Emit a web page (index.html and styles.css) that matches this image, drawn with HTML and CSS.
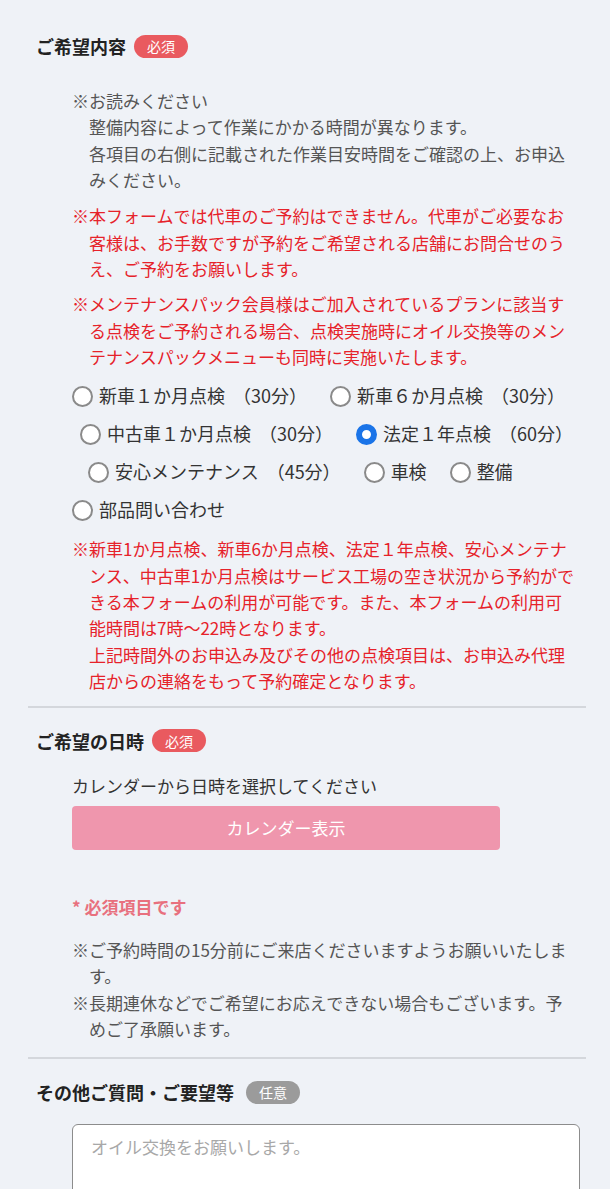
FILE: index.html
```html
<!DOCTYPE html>
<html lang="ja">
<head>
<meta charset="utf-8">
<title>ご予約フォーム</title>
<link rel="stylesheet" href="styles.css">
</head>
<body>
<div class="page">
  <section class="section section-first">
    <h2 class="heading">ご希望内容<span class="badge badge-req">必須</span></h2>
    <div class="body">
      <div class="note-gray">
        <p class="hang">※お読みください<br>整備内容によって作業にかかる時間が異なります。<br>各項目の右側に記載された作業目安時間をご確認の上、お申込みください。</p>
      </div>
      <p class="hang red red-1">※本フォームでは代車のご予約はできません。代車がご必要なお客様は、お手数ですが予約をご希望される店舗にお問合せのうえ、ご予約をお願いします。</p>
      <p class="hang red red-2">※メンテナンスパック会員様はご加入されているプランに該当する点検をご予約される場合、点検実施時にオイル交換等のメンテナンスパックメニューも同時に実施いたします。</p>
      <div class="radios">
        <div class="radio-row">
          <label class="radio"><input type="radio" name="menu"><span>新車１か月点検<span class="time">（30分）</span></span></label>
          <label class="radio"><input type="radio" name="menu"><span>新車６か月点検<span class="time">（30分）</span></span></label>
        </div>
        <div class="radio-row row-2">
          <label class="radio"><input type="radio" name="menu"><span>中古車１か月点検<span class="time">（30分）</span></span></label>
          <label class="radio"><input type="radio" name="menu" checked><span>法定１年点検<span class="time">（60分）</span></span></label>
        </div>
        <div class="radio-row row-3">
          <label class="radio"><input type="radio" name="menu"><span>安心メンテナンス<span class="time">（45分）</span></span></label>
          <label class="radio"><input type="radio" name="menu"><span>車検</span></label>
          <label class="radio"><input type="radio" name="menu"><span>整備</span></label>
        </div>
        <div class="radio-row">
          <label class="radio"><input type="radio" name="menu"><span>部品問い合わせ</span></label>
        </div>
      </div>
      <p class="hang red red-3">※新車1か月点検、新車6か月点検、法定１年点検、安心メンテナンス、中古車1か月点検はサービス工場の空き状況から予約ができる本フォームの利用が可能です。また、本フォームの利用可能時間は7時～22時となります。<br>上記時間外のお申込み及びその他の点検項目は、お申込み代理店からの連絡をもって予約確定となります。</p>
    </div>
  </section>

  <section class="section">
    <h2 class="heading">ご希望の日時<span class="badge badge-req">必須</span></h2>
    <div class="body">
      <p class="plain">カレンダーから日時を選択してください</p>
      <button type="button" class="cal-btn">カレンダー表示</button>
      <p class="required-msg">* 必須項目です</p>
      <div class="note-gray notes-2">
        <p class="hang">※ご予約時間の15分前にご来店くださいますようお願いいたします。</p>
        <p class="hang">※長期連休などでご希望にお応えできない場合もございます。予めご了承願います。</p>
      </div>
    </div>
  </section>

  <section class="section">
    <h2 class="heading">その他ご質問・ご要望等<span class="badge badge-opt">任意</span></h2>
    <div class="body">
      <textarea class="textarea" placeholder="オイル交換をお願いします。"></textarea>
    </div>
  </section>
</div>
</body>
</html>
```

FILE: styles.css
```css
* { box-sizing: border-box; }
html, body {
  margin: 0;
  padding: 0;
  background: #eff2f7;
}
body {
  font-family: "Noto Sans CJK JP", "Noto Sans", sans-serif;
  color: #333;
  font-size: 17px;
  line-height: 1.55;
}
.page {
  margin: 0 24px 0 28px;
}
.section {
  border-top: 2px solid #d4d7dc;
  padding: 21px 0 15px;
}
.section-first {
  border-top: none;
  padding-top: 34px;
  padding-bottom: 11px;
}
.heading {
  margin: 0 0 0 8px;
  display: flex;
  align-items: center;
  height: 24px;
  font-size: 18px;
  font-weight: 700;
  color: #222;
  line-height: 24px;
}
.badge {
  display: inline-flex;
  align-items: center;
  justify-content: center;
  height: 23px;
  padding: 0 13px;
  margin-left: 8px;
  border-radius: 12px;
  font-size: 14px;
  font-weight: 400;
  color: #fff;
}
.badge-req { background: #e95a5f; }
.badge-opt { background: #9b9b9b; margin-left: 12px; }
.body {
  padding-left: 44px;
  width: 550px;
}
.section-first .body { padding-top: 30px; }
p { margin: 0; }
.hang {
  padding-left: 1em;
  text-indent: -1em;
}
.note-gray { color: #555; }
.red { color: #e6222a; }
.red-1 { margin-top: 10px; }
.red-2 { margin-top: 9px; }
.red-3 { margin-top: 7px; }
.radios {
  margin-top: 7px;
  display: flex;
  flex-direction: column;
}
.radio-row {
  display: flex;
  align-items: center;
  gap: 23px;
  height: 38px;
}
.row-2 { padding-left: 8px; }
.row-3 { padding-left: 16px; }
.radio {
  display: inline-flex;
  align-items: center;
  gap: 6px;
  font-size: 18px;
  color: #333;
}
.time { margin-left: 8px; }
.radio input {
  -webkit-appearance: none;
  appearance: none;
  margin: 0;
  width: 21px;
  height: 21px;
  border-radius: 50%;
  border: 2px solid #8a8a8a;
  background: #fff;
  flex: none;
}
.radio input:checked {
  border: 6.5px solid #1a74e8;
  background: #fff;
}
.section:not(.section-first) .body { padding-top: 20px; }
.plain { color: #333; }
.cal-btn {
  display: block;
  margin-top: 7px;
  width: 428px;
  height: 44px;
  border: none;
  border-radius: 4px;
  background: #ef96ad;
  color: #fff;
  font-family: inherit;
  font-size: 17px;
}
.required-msg {
  margin-top: 45px;
  color: #e8707e;
  font-weight: 700;
  font-size: 17px;
  line-height: 24px;
}
.notes-2 { margin-top: 18px; }
.textarea {
  display: block;
  width: 508px;
  height: 110px;
  border: 1.5px solid #8c8c8c;
  border-radius: 6px;
  background: #fff;
  padding: 9px 18px;
  font-family: inherit;
  font-size: 17px;
  line-height: 1.55;
  resize: none;
}
.textarea::placeholder { color: #a8a8a8; }
```
